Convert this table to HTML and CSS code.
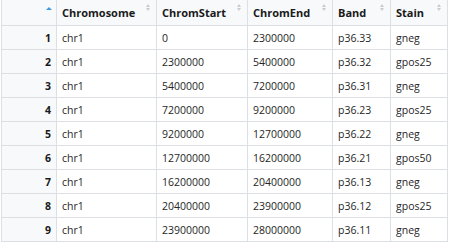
FILE: index.html
```html
<!DOCTYPE html>
<html>
<head>
<meta charset="utf-8">
<link rel="stylesheet" href="styles.css">
</head>
<body>
<table class="grid">
  <colgroup>
    <col class="c-idx"><col class="c-chr"><col class="c-start"><col class="c-end"><col class="c-band"><col class="c-stain">
  </colgroup>
  <thead>
    <tr>
      <th class="idx"><span class="sort-active"></span></th>
      <th><span class="label">Chromosome</span><span class="sort"></span></th>
      <th><span class="label">ChromStart</span><span class="sort"></span></th>
      <th><span class="label">ChromEnd</span><span class="sort"></span></th>
      <th><span class="label">Band</span><span class="sort"></span></th>
      <th><span class="label">Stain</span><span class="sort"></span></th>
    </tr>
  </thead>
  <tbody>
    <tr><td class="idx">1</td><td>chr1</td><td>0</td><td>2300000</td><td>p36.33</td><td>gneg</td></tr>
    <tr><td class="idx">2</td><td>chr1</td><td>2300000</td><td>5400000</td><td>p36.32</td><td>gpos25</td></tr>
    <tr><td class="idx">3</td><td>chr1</td><td>5400000</td><td>7200000</td><td>p36.31</td><td>gneg</td></tr>
    <tr><td class="idx">4</td><td>chr1</td><td>7200000</td><td>9200000</td><td>p36.23</td><td>gpos25</td></tr>
    <tr><td class="idx">5</td><td>chr1</td><td>9200000</td><td>12700000</td><td>p36.22</td><td>gneg</td></tr>
    <tr><td class="idx">6</td><td>chr1</td><td>12700000</td><td>16200000</td><td>p36.21</td><td>gpos50</td></tr>
    <tr><td class="idx">7</td><td>chr1</td><td>16200000</td><td>20400000</td><td>p36.13</td><td>gneg</td></tr>
    <tr><td class="idx">8</td><td>chr1</td><td>20400000</td><td>23900000</td><td>p36.12</td><td>gpos25</td></tr>
    <tr><td class="idx">9</td><td>chr1</td><td>23900000</td><td>28000000</td><td>p36.11</td><td>gneg</td></tr>
  </tbody>
</table>
</body>
</html>
```

FILE: styles.css
```css
html, body {
  margin: 0;
  padding: 0;
  background: #ffffff;
}
body {
  font-family: "Open Sans", "Noto Sans", sans-serif;
  font-size: 10.5px;
  color: #262626;
}
.grid {
  margin-left: 1px;
  border-collapse: separate;
  border-spacing: 0;
  table-layout: fixed;
  width: 447px;
}
.c-idx { width: 56px; }
.c-chr { width: 100px; }
.c-start { width: 91px; }
.c-end { width: 85px; }
.c-band { width: 58px; }
.c-stain { width: 57px; }

.grid th, .grid td {
  box-sizing: border-box;
  border-right: 1px solid #dcdfe3;
  border-bottom: 1px solid #dcdfe3;
  padding: 0 5px;
  text-align: left;
  white-space: nowrap;
  overflow: hidden;
}
.grid th:first-child, .grid td:first-child {
  border-left: 1px solid #dcdfe3;
}
.grid th {
  height: 26px;
  background: #f7f9fb;
  font-size: 11px;
  font-weight: 700;
  color: #1a1a1a;
  position: relative;
  vertical-align: middle;
}
.grid td {
  height: 24px;
  vertical-align: middle;
}
.grid td.idx {
  background: #f7f9fb;
  text-align: right;
  font-weight: 700;
  color: #1a1a1a;
  padding-right: 5px;
}
.label {
  display: block;
}
.sort {
  position: absolute;
  right: 5px;
  top: 4px;
  width: 5px;
  height: 8px;
}
.sort::before, .sort::after {
  content: "";
  position: absolute;
  left: 0;
  border-left: 2.5px solid transparent;
  border-right: 2.5px solid transparent;
}
.sort::before {
  top: 0;
  border-bottom: 3px solid #c9ccd0;
}
.sort::after {
  top: 4px;
  border-top: 3px solid #c9ccd0;
}
.sort-active {
  position: absolute;
  right: 4px;
  top: 7px;
  width: 0;
  height: 0;
  border-left: 3.5px solid transparent;
  border-right: 3.5px solid transparent;
  border-bottom: 3.5px solid #3c9ae6;
}
```
